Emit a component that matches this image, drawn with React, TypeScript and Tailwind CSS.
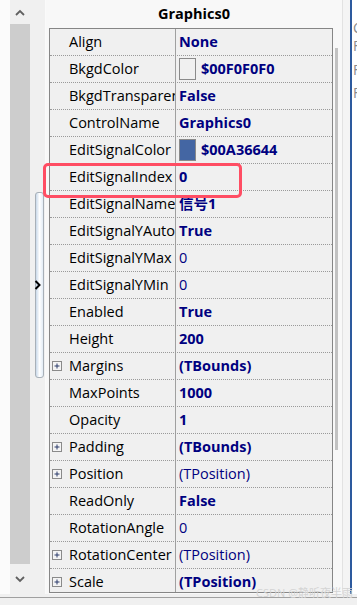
import React from "react";

type Row = {
  name: string;
  value: string;
  bold?: boolean;
  plus?: boolean;
  swatch?: string;
};

const rows: Row[] = [
  { name: "Align", value: "None", bold: true },
  { name: "BkgdColor", value: "$00F0F0F0", bold: true, swatch: "#f0f0f0" },
  { name: "BkgdTransparent", value: "False", bold: true },
  { name: "ControlName", value: "Graphics0", bold: true },
  { name: "EditSignalColor", value: "$00A36644", bold: true, swatch: "#4466a3" },
  { name: "EditSignalIndex", value: "0", bold: true },
  { name: "EditSignalName", value: "信号1", bold: true },
  { name: "EditSignalYAuto", value: "True", bold: true },
  { name: "EditSignalYMax", value: "0" },
  { name: "EditSignalYMin", value: "0" },
  { name: "Enabled", value: "True", bold: true },
  { name: "Height", value: "200", bold: true },
  { name: "Margins", value: "(TBounds)", bold: true, plus: true },
  { name: "MaxPoints", value: "1000", bold: true },
  { name: "Opacity", value: "1", bold: true },
  { name: "Padding", value: "(TBounds)", bold: true, plus: true },
  { name: "Position", value: "(TPosition)", plus: true },
  { name: "ReadOnly", value: "False", bold: true },
  { name: "RotationAngle", value: "0" },
  { name: "RotationCenter", value: "(TPosition)", plus: true },
  { name: "Scale", value: "(TPosition)", bold: true, plus: true },
];

const font = { fontFamily: '"Open Sans", "Noto Sans CJK SC", sans-serif' };

function PlusBox() {
  return (
    <svg width="10" height="10" viewBox="0 0 10 10" className="shrink-0">
      <rect x="0.5" y="0.5" width="9" height="9" fill="#f4f4f4" stroke="#8a8a8a" />
      <path d="M2.5 5h5M5 2.5v5" stroke="#2a3a6a" strokeWidth="1" />
    </svg>
  );
}

function InspectorRow({ row }: { row: Row }) {
  return (
    <div className="flex h-[27px] shrink-0 border-b border-dotted border-[#9a9a9a]">
      <div className="flex w-[125px] shrink-0 items-center overflow-hidden whitespace-nowrap pl-[2px]">
        {row.plus ? <PlusBox /> : <div className="w-[10px] shrink-0" />}
        <span className="ml-[7px] text-[14.5px] text-black">{row.name}</span>
      </div>
      <div className="flex flex-1 items-center overflow-hidden whitespace-nowrap border-l border-[#a0a0a0] pl-[3px]">
        {row.swatch && (
          <div
            className="mr-[5px] h-[22px] w-[17px] shrink-0 border border-[#8a8a8a]"
            style={{ background: row.swatch }}
          />
        )}
        <span
          className={
            "text-[14.5px] text-[#000080] " + (row.bold ? "font-bold" : "font-normal")
          }
        >
          {row.value}
        </span>
      </div>
    </div>
  );
}

export default function App() {
  return (
    <div
      className="relative flex h-[605px] w-[357px] flex-col overflow-hidden bg-[#f0f0f0]"
      style={font}
    >
      <div className="flex h-[594px] shrink-0">
        {/* white strip */}
        <div className="w-[10px] shrink-0 bg-[#fbfbfb]" />

        {/* left scrollbar */}
        <div className="flex w-[20px] shrink-0 flex-col bg-[#f0f0f0]">
          <div className="flex h-[24px] items-center justify-center">
            <svg width="10" height="7" viewBox="0 0 10 7">
              <polyline points="1,6 5,2 9,6" fill="none" stroke="#606060" strokeWidth="1.8" />
            </svg>
          </div>
          <div className="flex-1 bg-[#cdcdcd]" />
          <div className="flex h-[30px] items-center justify-center">
            <svg width="10" height="7" viewBox="0 0 10 7">
              <polyline points="1,1 5,5 9,1" fill="none" stroke="#606060" strokeWidth="1.8" />
            </svg>
          </div>
        </div>

        {/* splitter column */}
        <div className="flex w-[16px] shrink-0 flex-col items-end border-r border-[#fafafa] pr-[1px] pt-[192px]">
          <div className="relative flex h-[186px] w-[9px] items-center rounded-[3px] border border-[#a8b0b8] bg-gradient-to-r from-[#c9d9ea] via-white to-[#e2ecf6]">
            <svg width="7" height="10" viewBox="0 0 7 10" className="-ml-[2px]">
              <polyline points="1.5,1 5.5,5 1.5,9" fill="none" stroke="#000" strokeWidth="2" />
            </svg>
          </div>
        </div>

        {/* inspector panel */}
        <div className="flex w-[297px] shrink-0 flex-col border-r border-[#e2e2e2] bg-[#f8f8f8]">
          <div className="flex h-[28px] shrink-0 items-center justify-center text-[14.5px] font-bold text-black">
            Graphics0
          </div>
          <div className="flex">
            <div className="ml-[3px] flex h-[565px] w-[284px] flex-col overflow-hidden border border-[#868686] bg-[#f0f0f0]">
              {rows.map((r) => (
                <InspectorRow key={r.name} row={r} />
              ))}
            </div>
            <div className="ml-[2px] mt-[20px] h-[402px] w-[3px] bg-[#c2c2c2]" />
          </div>
        </div>

        {/* right area */}
        <div className="w-[7px] shrink-0 bg-[#f4f4f4]" />
        <div className="w-[2px] shrink-0 bg-[#2d5a9e]" />
        <div className="flex flex-1 flex-col overflow-hidden bg-white pl-[1px] pt-[18px] text-[14px] leading-[20px] text-[#8a8a8a]">
          <div>C</div>
          <div className="mt-[-2px]">F</div>
          <div className="mt-[4px]">F</div>
          <div className="mt-[3px]">F</div>
        </div>
      </div>

      <div className="mt-[3px] flex-1 border-t border-[#a0a0a0] bg-[#f0f0f0]" />

      {/* red highlight annotation */}
      <div className="pointer-events-none absolute left-[43px] top-[163px] h-[35px] w-[199px] rounded-[5px] border-[3px] border-[#ff4d63]" />

      {/* watermark */}
      <div className="pointer-events-none absolute bottom-[6px] right-[4px] text-[11px] leading-[12px] text-[#d4d4d4]">
        CSDN @静听夜半雨
      </div>
    </div>
  );
}
